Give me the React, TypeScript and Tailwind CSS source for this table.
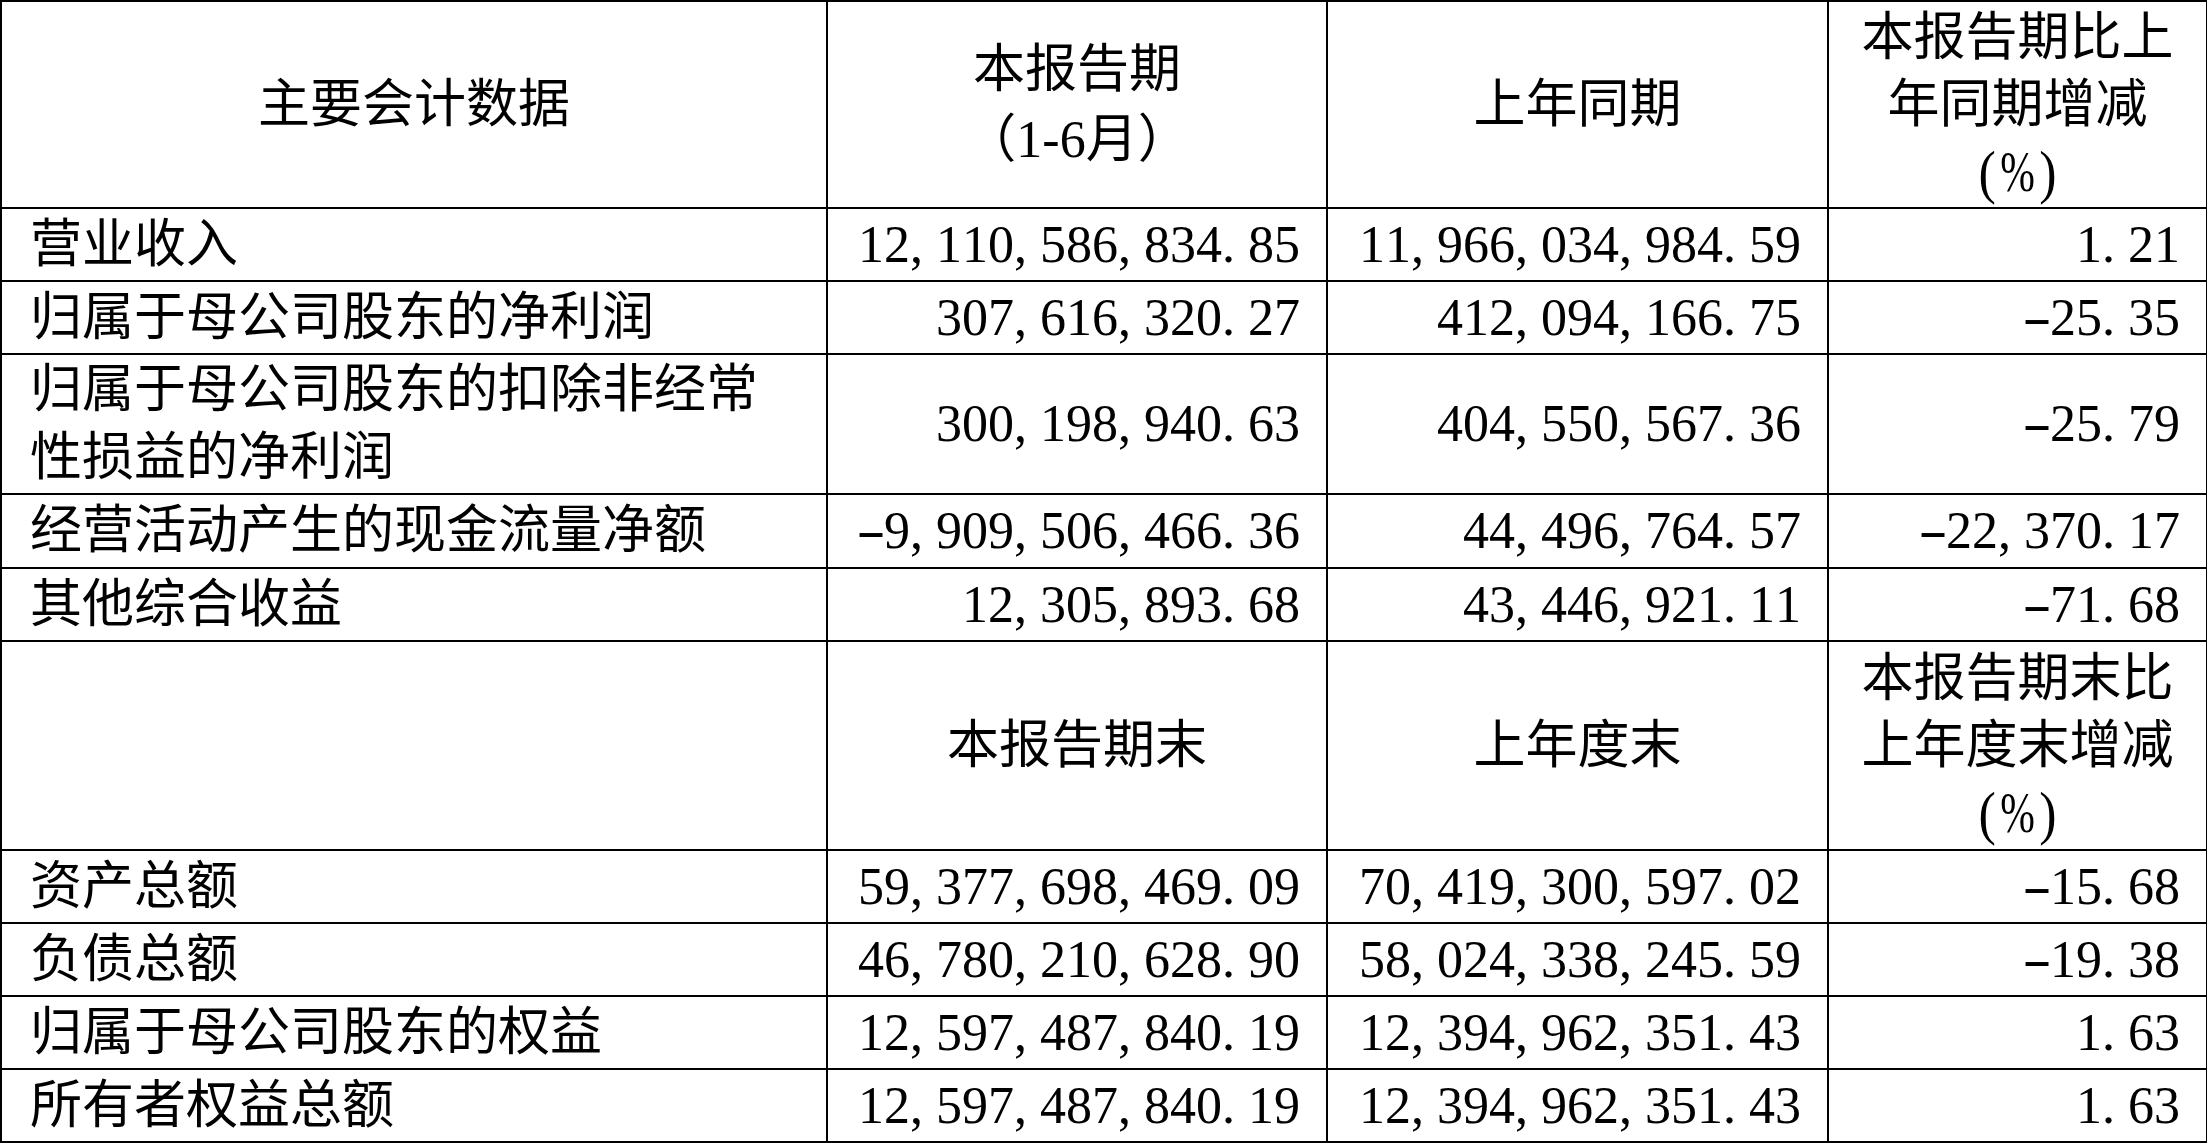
import React from "react";

type Row = {
  label: string[];
  cur: string;
  prev: string;
  pct: string;
  h: string;
};

const topRows: Row[] = [
  { label: ["营业收入"], cur: "12,110,586,834.85", prev: "11,966,034,984.59", pct: "1.21", h: "h-[73px]" },
  { label: ["归属于母公司股东的净利润"], cur: "307,616,320.27", prev: "412,094,166.75", pct: "-25.35", h: "h-[73px]" },
  {
    label: ["归属于母公司股东的扣除非经常", "性损益的净利润"],
    cur: "300,198,940.63",
    prev: "404,550,567.36",
    pct: "-25.79",
    h: "h-[140px]",
  },
  { label: ["经营活动产生的现金流量净额"], cur: "-9,909,506,466.36", prev: "44,496,764.57", pct: "-22,370.17", h: "h-[74px]" },
  { label: ["其他综合收益"], cur: "12,305,893.68", prev: "43,446,921.11", pct: "-71.68", h: "h-[73px]" },
];

const bottomRows: Row[] = [
  { label: ["资产总额"], cur: "59,377,698,469.09", prev: "70,419,300,597.02", pct: "-15.68", h: "h-[73px]" },
  { label: ["负债总额"], cur: "46,780,210,628.90", prev: "58,024,338,245.59", pct: "-19.38", h: "h-[73px]" },
  { label: ["归属于母公司股东的权益"], cur: "12,597,487,840.19", prev: "12,394,962,351.43", pct: "1.63", h: "h-[73px]" },
  { label: ["所有者权益总额"], cur: "12,597,487,840.19", prev: "12,394,962,351.43", pct: "1.63", h: "h-[73px]" },
];

// SimSun style: every digit / sign takes half an em
const Num = ({ value }: { value: string }) => (
  <span className="whitespace-nowrap font-['Liberation_Serif',serif]">
    {value.split("").map((c, i) => {
      if (c === "," || c === ".")
        return (
          <span key={i} className="inline-block w-[0.5em] text-left">
            {c}
          </span>
        );
      if (c === "-")
        return (
          <span key={i} className="inline-block w-[0.5em] text-center scale-x-[1.7]">
            {c}
          </span>
        );
      return (
        <span key={i} className="inline-block w-[0.5em] text-center">
          {c}
        </span>
      );
    })}
  </span>
);

const Pct = () => (
  <div className="font-['Liberation_Serif',serif]">
    <span className="inline-block scale-y-[1.15]">(</span>
    <span className="inline-block scale-x-[0.8] scale-y-[1.1]">%</span>
    <span className="inline-block scale-y-[1.15]">)</span>
  </div>
);

const cell = "border-2 border-black px-[28px] py-0 align-middle";

const DataRow = ({ row }: { row: Row }) => (
  <tr className={row.h}>
    <td className={`${cell} text-left`}>
      {row.label.map((l) => (
        <div key={l}>{l}</div>
      ))}
    </td>
    <td className={`${cell} text-right pr-[26px]`}>
      <Num value={row.cur} />
    </td>
    <td className={`${cell} text-right pr-[26px]`}>
      <Num value={row.prev} />
    </td>
    <td className={`${cell} text-right pr-[26px]`}>
      <Num value={row.pct} />
    </td>
  </tr>
);

export default function App() {
  return (
    <div className="w-[2207px] h-[1144px] bg-white overflow-hidden">
      <table className="w-[2206px] table-fixed border-collapse text-black text-[52px] leading-[68px] font-['Liberation_Serif','Noto_Sans_CJK_SC',serif]">
        <colgroup>
          <col className="w-[826px]" />
          <col className="w-[500px]" />
          <col className="w-[501px]" />
          <col className="w-[379px]" />
        </colgroup>
        <tbody>
          <tr className="h-[207px]">
            <td className={`${cell} text-center`}>主要会计数据</td>
            <td className={`${cell} text-center leading-[70px]`}>
              <div>本报告期</div>
              <div>（1-6月）</div>
            </td>
            <td className={`${cell} text-center`}>上年同期</td>
            <td className={`${cell} text-center px-0 leading-[67px]`}>
              <div>本报告期比上</div>
              <div>年同期增减</div>
              <Pct />
            </td>
          </tr>
          {topRows.map((r) => (
            <DataRow key={r.label.join("")} row={r} />
          ))}
          <tr className="h-[209px]">
            <td className={cell}></td>
            <td className={`${cell} text-center`}>本报告期末</td>
            <td className={`${cell} text-center`}>上年度末</td>
            <td className={`${cell} text-center px-0 leading-[67px]`}>
              <div>本报告期末比</div>
              <div>上年度末增减</div>
              <Pct />
            </td>
          </tr>
          {bottomRows.map((r) => (
            <DataRow key={r.label.join("")} row={r} />
          ))}
        </tbody>
      </table>
    </div>
  );
}
